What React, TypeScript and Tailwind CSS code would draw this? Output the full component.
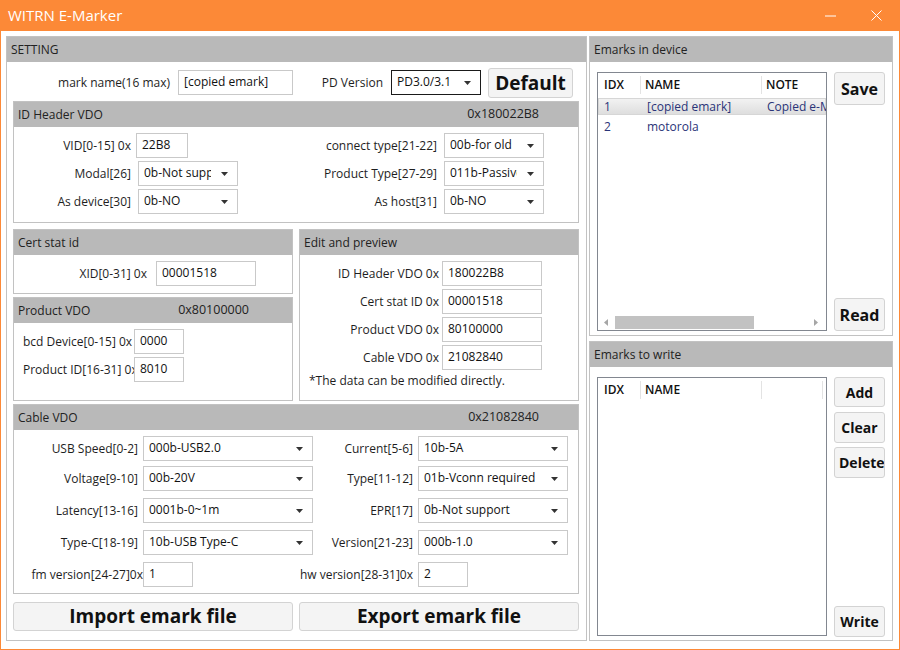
import React from "react";

type Props = { className?: string; children?: React.ReactNode };

const Arrow = () => (
  <svg width="7" height="4" viewBox="0 0 7 4" className="shrink-0">
    <path d="M0 0h7L3.5 4z" fill="#333" />
  </svg>
);

function Field({ value, className = "" }: { value: string; className?: string }) {
  return (
    <div
      className={`flex h-[25px] shrink-0 items-center overflow-hidden whitespace-nowrap border border-[#c9c9c9] bg-white pb-[2px] pl-[5px] text-[12px] text-[#111] ${className}`}
    >
      {value}
    </div>
  );
}

function Select({ value, className = "", dark }: { value: string; className?: string; dark?: boolean }) {
  return (
    <div
      className={`flex h-[25px] shrink-0 items-center border bg-white pl-[5px] pr-[9px] text-[12px] text-[#111] ${
        dark ? "border-[#1a1a1a]" : "border-[#c9c9c9]"
      } ${className}`}
    >
      <span className="mr-[10px] flex-1 overflow-hidden whitespace-nowrap pb-[1px]">{value}</span>
      <Arrow />
    </div>
  );
}

function Label({ className = "", children }: Props) {
  return (
    <div className={`flex h-[25px] shrink-0 items-center justify-end whitespace-nowrap text-[12px] text-[#1e1e1e] ${className}`}>
      {children}
    </div>
  );
}

function Btn({ className = "", children }: Props) {
  return (
    <button
      className={`flex shrink-0 items-center justify-center rounded-[3px] border border-[#d3d3d3] bg-[#f4f4f4] font-bold text-[#111] ${className}`}
    >
      {children}
    </button>
  );
}

function Group({
  title,
  hex,
  hexClass = "",
  className = "",
  children,
}: Props & { title: string; hex?: string; hexClass?: string }) {
  return (
    <div className={`flex shrink-0 flex-col border border-[#c2c2c2] ${className}`}>
      <div className="flex h-[25px] shrink-0 items-center bg-[#b9b9b9] px-[4px] text-[12px] text-[#222]">
        <span>{title}</span>
        {hex && <span className={`ml-auto text-[12.5px] ${hexClass}`}>{hex}</span>}
      </div>
      {children}
    </div>
  );
}

function TitleBar() {
  return (
    <div className="flex h-[31px] shrink-0 items-center pl-[8px] pr-[18px] text-[15px] text-white">
      <span>WITRN E-Marker</span>
      <svg width="11" height="2" viewBox="0 0 11 2" className="ml-auto">
        <path d="M0 1h11" stroke="#fff" strokeWidth="1" />
      </svg>
      <svg width="11" height="11" viewBox="0 0 11 11" className="ml-[35px]">
        <path d="M0.5 0.5l10 10M10.5 0.5l-10 10" stroke="#fff" strokeWidth="1" />
      </svg>
    </div>
  );
}

function IdHeader() {
  return (
    <Group title="ID Header VDO" hex="0x180022B8" hexClass="mr-[35px]" className="h-[122px]">
      <div className="flex pt-[6px]">
        <div className="flex w-[276px] flex-col gap-[3px]">
          <div className="flex">
            <Label className="w-[117px]">VID[0-15] 0x</Label>
            <Field value="22B8" className="ml-[5px] w-[52px]" />
          </div>
          <div className="flex">
            <Label className="w-[117px]">Modal[26]</Label>
            <Select value="0b-Not support" className="ml-[7px] w-[100px]" />
          </div>
          <div className="flex">
            <Label className="w-[117px]">As device[30]</Label>
            <Select value="0b-NO" className="ml-[7px] w-[100px]" />
          </div>
        </div>
        <div className="flex flex-col gap-[3px]">
          <div className="flex">
            <Label className="w-[147px]">connect type[21-22]</Label>
            <Select value="00b-for old" className="ml-[7px] w-[100px]" />
          </div>
          <div className="flex">
            <Label className="w-[147px]">Product Type[27-29]</Label>
            <Select value="011b-Passive cable" className="ml-[7px] w-[100px]" />
          </div>
          <div className="flex">
            <Label className="w-[147px]">As host[31]</Label>
            <Select value="0b-NO" className="ml-[7px] w-[100px]" />
          </div>
        </div>
      </div>
    </Group>
  );
}

function CableVdo() {
  const rows = [
    ["USB Speed[0-2]", "000b-USB2.0", "Current[5-6]", "10b-5A", "mt-[6px]"],
    ["Voltage[9-10]", "00b-20V", "Type[11-12]", "01b-Vconn required", "mt-[5px]"],
    ["Latency[13-16]", "0001b-0~1m", "EPR[17]", "0b-Not support", "mt-[7px]"],
    ["Type-C[18-19]", "10b-USB Type-C", "Version[21-23]", "000b-1.0", "mt-[7px]"],
  ];
  return (
    <Group title="Cable VDO" hex="0x21082840" hexClass="mr-[35px]" className="mt-[3px] h-[190px]">
      {rows.map(([l1, v1, l2, v2, mt]) => (
        <div key={l1} className={`flex ${mt}`}>
          <Label className="w-[124px]">{l1}</Label>
          <Select value={v1} className="ml-[5px] w-[170px]" />
          <Label className="w-[100px]">{l2}</Label>
          <Select value={v2} className="ml-[5px] w-[150px]" />
        </div>
      ))}
      <div className="mt-[7px] flex">
        <Label className="w-[129px]">fm version[24-27]0x</Label>
        <Field value="1" className="w-[50px]" />
        <Label className="w-[220px]">hw version[28-31]0x</Label>
        <Field value="2" className="ml-[5px] w-[50px]" />
      </div>
    </Group>
  );
}

function SettingPanel() {
  return (
    <div className="flex w-[581px] shrink-0 flex-col border border-[#c2c2c2]">
      <div className="flex h-[25px] shrink-0 items-center bg-[#b9b9b9] px-[4px] text-[12px] text-[#222]">SETTING</div>
      <div className="flex flex-col pl-[6px] pr-[7px]">
        <div className="flex h-[39px] items-start">
          <Label className="mt-[8px] w-[157px]">mark name(16 max)</Label>
          <Field value="[copied emark]" className="ml-[8px] mt-[8px] w-[115px] text-[12.5px]" />
          <Label className="mt-[8px] w-[90px]">PD Version</Label>
          <Select value="PD3.0/3.1" dark className="ml-[8px] mt-[8px] w-[90px]" />
          <Btn className="ml-[7px] mt-[6px] h-[30px] w-[85px] text-[19px]">Default</Btn>
        </div>

        <IdHeader />

        <div className="mt-[6px] flex gap-[6px]">
          <div className="flex w-[280px] flex-col">
            <Group title="Cert stat id" className="h-[65px]">
              <div className="flex pt-[6px]">
                <Label className="w-[133px]">XID[0-31] 0x</Label>
                <Field value="00001518" className="ml-[9px] w-[100px]" />
              </div>
            </Group>
            <Group title="Product VDO" hex="0x80100000" hexClass="mr-[39px]" className="mt-[3px] h-[104px]">
              <div className="flex flex-col gap-[3px] pt-[6px]">
                <div className="flex">
                  <Label className="ml-[9px] w-[111px] justify-start overflow-hidden text-[12.5px]">bcd Device[0-15] 0x</Label>
                  <Field value="0000" className="w-[50px]" />
                </div>
                <div className="flex">
                  <Label className="ml-[9px] w-[111px] justify-start overflow-hidden text-[12.5px]">Product ID[16-31] 0x</Label>
                  <Field value="8010" className="w-[50px]" />
                </div>
              </div>
            </Group>
          </div>
          <Group title="Edit and preview" className="h-[172px] w-[280px]">
            <div className="flex flex-col gap-[3px] pt-[6px]">
              {[
                ["ID Header VDO 0x", "180022B8"],
                ["Cert stat ID 0x", "00001518"],
                ["Product VDO 0x", "80100000"],
                ["Cable VDO 0x", "21082840"],
              ].map(([l, v]) => (
                <div key={l} className="flex">
                  <Label className="w-[139px]">{l}</Label>
                  <Field value={v} className="ml-[3px] w-[100px]" />
                </div>
              ))}
            </div>
            <div className="mt-[2px] pl-[9px] text-[12px] text-[#1e1e1e]">*The data can be modified directly.</div>
          </Group>
        </div>

        <CableVdo />

        <div className="mt-[8px] flex gap-[6px]">
          <Btn className="h-[29px] w-[280px] text-[19px]">Import emark file</Btn>
          <Btn className="h-[29px] w-[280px] text-[19px]">Export emark file</Btn>
        </div>
      </div>
    </div>
  );
}

function ListHead({ cols }: { cols: number }) {
  return (
    <div className="flex h-[23px] shrink-0 items-center text-[12px] font-semibold text-[#111]">
      <div className="w-[43px] border-r border-[#e3e3e3] pl-[6px] leading-[18px]">IDX</div>
      <div className="w-[121px] border-r border-[#e3e3e3] pl-[4px] leading-[18px]">NAME</div>
      {cols === 3 ? (
        <div className="whitespace-nowrap pl-[4px] leading-[18px]">NOTE</div>
      ) : (
        <div className="w-[61px] border-r border-[#e3e3e3] leading-[18px]">&nbsp;</div>
      )}
    </div>
  );
}

function DevicePanel() {
  return (
    <div className="flex h-[300px] flex-col border border-[#c2c2c2]">
      <div className="flex h-[25px] shrink-0 items-center bg-[#b9b9b9] px-[4px] text-[12px] text-[#222]">Emarks in device</div>
      <div className="flex pl-[7px] pt-[10px]">
        <div className="flex h-[259px] w-[230px] flex-col overflow-hidden border border-[#828790] bg-white">
          <ListHead cols={3} />
          <div className="mt-[2px] flex h-[17px] items-center whitespace-nowrap border border-[#d6d6d6] bg-linear-to-b from-[#f2f2f2] to-[#dedede] text-[12px] text-[#2a3478]">
            <span className="w-[42px] shrink-0 pl-[5px]">1</span>
            <span className="w-[121px] shrink-0 overflow-hidden pl-[6px]">[copied emark]</span>
            <span className="pl-[5px]">Copied e-Marker</span>
          </div>
          <div className="mt-[3px] flex h-[17px] items-center whitespace-nowrap text-[12px] text-[#2a3478]">
            <span className="w-[43px] shrink-0 pl-[6px]">2</span>
            <span className="w-[121px] shrink-0 pl-[6px]">motorola</span>
          </div>
          <div className="mt-auto mb-[1px] flex h-[14px] items-center">
            <svg width="4" height="7" viewBox="0 0 4 7" className="ml-[6px]">
              <path d="M4 0v7L0 3.5z" fill="#a6a6a6" />
            </svg>
            <div className="ml-[7px] h-[13px] w-[139px] bg-[#c2c2c2]" />
            <svg width="4" height="7" viewBox="0 0 4 7" className="ml-auto mr-[8px]">
              <path d="M0 0v7L4 3.5z" fill="#a6a6a6" />
            </svg>
          </div>
        </div>
        <div className="ml-[7px] flex h-[259px] w-[51px] flex-col justify-between">
          <Btn className="h-[33px] text-[16px]">Save</Btn>
          <Btn className="h-[33px] text-[16px]">Read</Btn>
        </div>
      </div>
    </div>
  );
}

function WritePanel() {
  return (
    <div className="flex h-[300px] flex-col border border-[#c2c2c2]">
      <div className="flex h-[25px] shrink-0 items-center bg-[#b9b9b9] px-[4px] text-[12px] text-[#222]">Emarks to write</div>
      <div className="flex pl-[7px] pt-[10px]">
        <div className="flex h-[259px] w-[230px] flex-col overflow-hidden border border-[#828790] bg-white">
          <ListHead cols={2} />
        </div>
        <div className="ml-[7px] flex h-[260px] w-[51px] flex-col">
          <Btn className="h-[30px] text-[14px]">Add</Btn>
          <Btn className="mt-[5px] h-[31px] text-[14px]">Clear</Btn>
          <Btn className="mt-[4px] h-[31px] justify-start overflow-hidden whitespace-nowrap pl-[4px] text-[14px]">Delete</Btn>
          <Btn className="mt-auto h-[31px] text-[14px]">Write</Btn>
        </div>
      </div>
    </div>
  );
}

export default function App() {
  return (
    <div className="flex h-[650px] w-[900px] flex-col bg-[#fc8937] font-['Open_Sans',sans-serif] text-[#1a1a1a]">
      <TitleBar />
      <div className="mx-px mb-px flex flex-1 gap-[2px] bg-white pb-[8px] pl-[5px] pr-[6px] pt-[5px]">
        <SettingPanel />
        <div className="flex w-[304px] shrink-0 flex-col gap-[5px]">
          <DevicePanel />
          <WritePanel />
        </div>
      </div>
    </div>
  );
}
